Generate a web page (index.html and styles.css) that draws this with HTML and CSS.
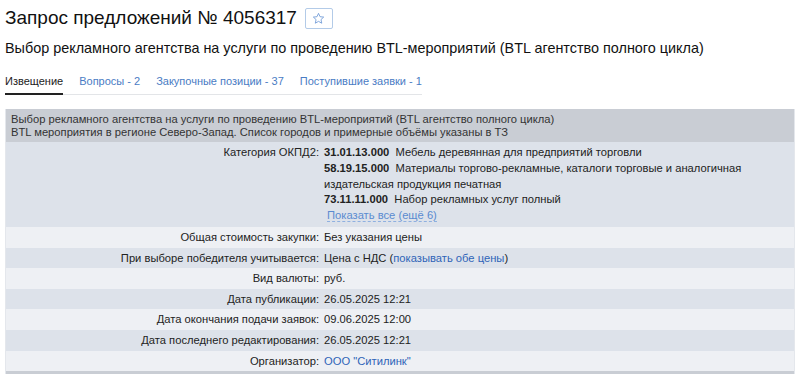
FILE: index.html
```html
<!DOCTYPE html>
<html lang="ru">

<head>
    <meta charset="UTF-8">
    <meta name="viewport" content="width=device-width, initial-scale=1.0">
    <title>Запрос предложений № 4056317</title>
    <link rel="stylesheet" href="styles.css">
</head>

<body>

    <div class="title">
        <h1>Запрос предложений № 4056317</h1>
        <button type="button" class="fav">
            <svg width="13" height="13" viewBox="0 0 24 24">
                <path d="M12 2.5l2.9 6.2 6.7.7-5 4.6 1.4 6.7L12 17.3l-5.9 3.4 1.4-6.7-5-4.6 6.7-.7z" fill="none" stroke="#6f9ad6" stroke-width="1.6" stroke-linejoin="round"/>
            </svg>
        </button>
    </div>
    <h2 class="subtitle">Выбор рекламного агентства на услуги по проведению BTL-мероприятий (BTL агентство полного цикла)</h2>

    <ul class="tabs">
        <li class="active">Извещение</li>
        <li><a href="#">Вопросы - 2</a></li>
        <li><a href="#">Закупочные позиции - 37</a></li>
        <li><a href="#">Поступившие заявки - 1</a></li>
    </ul>

    <table class="info">
        <tr class="head">
            <td colspan="2">Выбор рекламного агентства на услуги по проведению BTL-мероприятий (BTL агентство полного цикла)<br>
                BTL мероприятия в регионе Северо-Запад. Список городов и примерные объёмы указаны в ТЗ</td>
        </tr>
        <tr class="dark okpd">
            <td class="label">Категория ОКПД2:</td>
            <td>
                <div><b>31.01.13.000</b>&nbsp; Мебель деревянная для предприятий торговли</div>
                <div><b>58.19.15.000</b>&nbsp; Материалы торгово-рекламные, каталоги торговые и аналогичная издательская продукция печатная</div>
                <div><b>73.11.11.000</b>&nbsp; Набор рекламных услуг полный</div>
                <a href="#" class="more">Показать все (ещё 6)</a>
            </td>
        </tr>
        <tr class="light">
            <td class="label">Общая стоимость закупки:</td>
            <td>Без указания цены</td>
        </tr>
        <tr class="dark">
            <td class="label">При выборе победителя учитывается:</td>
            <td>Цена с НДС (<a href="#">показывать обе цены</a>)</td>
        </tr>
        <tr class="light">
            <td class="label">Вид валюты:</td>
            <td>руб.</td>
        </tr>
        <tr class="dark">
            <td class="label">Дата публикации:</td>
            <td>26.05.2025 12:21</td>
        </tr>
        <tr class="light">
            <td class="label">Дата окончания подачи заявок:</td>
            <td>09.06.2025 12:00</td>
        </tr>
        <tr class="dark">
            <td class="label">Дата последнего редактирования:</td>
            <td>26.05.2025 12:21</td>
        </tr>
        <tr class="light">
            <td class="label">Организатор:</td>
            <td><a href="#">ООО "Ситилинк"</a></td>
        </tr>
        <tr class="foot">
            <td colspan="2"></td>
        </tr>
    </table>

</body>

</html>
```

FILE: styles.css
```css
body {
    margin: 0 5px;
    font-family: "Liberation Sans", Arial, sans-serif;
    color: #222;
    background: #fff;
}

a {
    color: #2f64b8;
    text-decoration: none;
}

.title {
    display: flex;
    align-items: center;
    gap: 8px;
    padding-top: 6px;
}

.title h1 {
    margin: 0;
    font-size: 19px;
    font-weight: normal;
    line-height: 24px;
    color: #111;
}

.fav {
    width: 28px;
    height: 21px;
    padding: 0;
    border: 1px solid #b3cbe8;
    border-radius: 2px;
    background: #fff;
    display: flex;
    align-items: center;
    justify-content: center;
}

.subtitle {
    margin: 9px 0 0;
    font-size: 14.4px;
    font-weight: normal;
    line-height: 18px;
    color: #111;
}

.tabs {
    list-style: none;
    margin: 18px 0 0;
    padding: 0;
    display: inline-flex;
    gap: 16px;
    border-bottom: 1px solid #e3e5e8;
    font-size: 11px;
    white-space: nowrap;
}

.tabs li {
    padding-bottom: 5px;
    line-height: 13px;
}

.tabs a {
    color: #4a7cc4;
}

.tabs .active {
    color: #222;
    border-bottom: 2px solid #222;
    margin-bottom: -1px;
}

.info {
    margin-top: 14px;
    width: 790px;
    border-collapse: collapse;
    font-size: 11.2px;
    border-left: 1px solid #e4e7ec;
    border-right: 1px solid #e4e7ec;
}

.info td {
    padding: 3px 3px;
    line-height: 14.6px;
    vertical-align: top;
}

.info .label {
    width: 310px;
    text-align: right;
    padding-right: 2px;
}

.head td {
    background: #c9cdd4;
    color: #333;
    line-height: 13px;
    padding: 4px 5px 3px;
}

.dark td {
    background: #dde2ea;
}

.light td {
    background: #eef0f4;
}

.okpd td {
    line-height: 15.8px;
    padding: 3px 3px 3px;
}

.okpd td div {
    max-width: 418px;
}

.more {
    margin-left: 3px;
    color: #5a8bd0;
    border-bottom: 1px dashed #8fb0e0;
}

.foot td {
    background: #c9cdd4;
    height: 3px;
    padding: 0;
}
```
